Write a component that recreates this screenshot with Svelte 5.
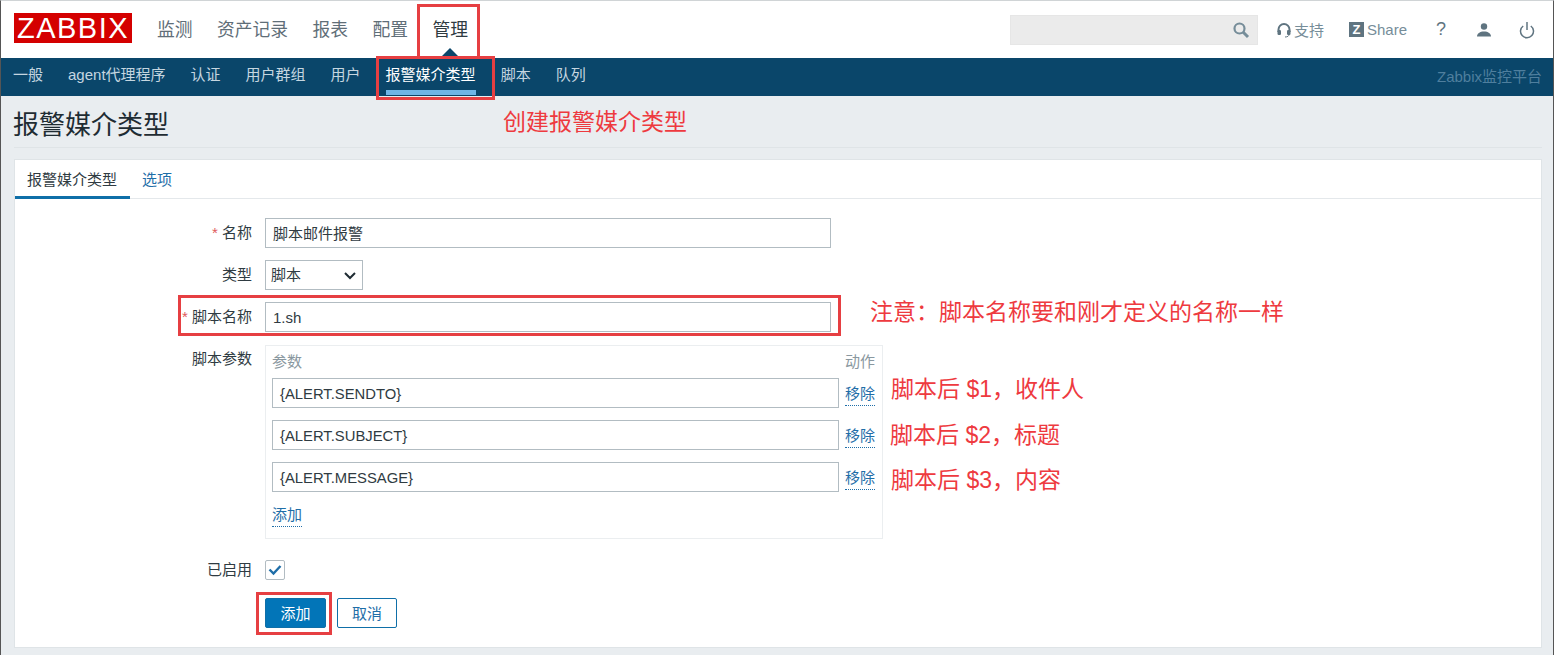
<script lang="ts">
  const mainNav = ['监测', '资产记录', '报表', '配置', '管理'];
  const subNav = ['一般', 'agent代理程序', '认证', '用户群组', '用户', '报警媒介类型', '脚本', '队列'];
  const params = ['{ALERT.SENDTO}', '{ALERT.SUBJECT}', '{ALERT.MESSAGE}'];
</script>

<div class="page">
  <header class="top">
    <div class="logo">ZABBIX</div>
    <nav class="main-nav">
      {#each mainNav as item, i}
        <span class="main-item" class:selected={i === 4}>{item}</span>
      {/each}
    </nav>
    <div class="tools">
      <div class="search">
        <svg width="18" height="18" viewBox="0 0 18 18" fill="none" stroke="#768d99">
          <circle cx="7.5" cy="7.5" r="5" stroke-width="2.2" />
          <path d="M11 11l5 5" stroke-width="3" />
        </svg>
      </div>
      <span class="tool support">
        <svg width="16" height="16" viewBox="0 0 16 16" fill="none">
          <path d="M2.5 10V7.5a5.5 5.5 0 0 1 11 0V10" stroke="#5f7480" stroke-width="2" />
          <rect x="1.5" y="8" width="3.5" height="5" rx="1.2" fill="#5f7480" />
          <rect x="11" y="8" width="3.5" height="5" rx="1.2" fill="#5f7480" />
          <path d="M13 12.5c0 1.5-1.5 2.5-4 2.5" stroke="#5f7480" />
        </svg>
        支持
      </span>
      <span class="tool share"><b class="z">Z</b>Share</span>
      <span class="tool help">?</span>
      <svg class="user" width="16" height="16" viewBox="0 0 16 16" fill="#5f7480">
        <circle cx="8" cy="4.5" r="3.2" />
        <path d="M1 14.5c0-3 3-5 7-5s7 2 7 5z" />
      </svg>
      <svg class="power" width="16" height="18" viewBox="0 0 16 18" fill="none" stroke="#5f7480" stroke-width="1.5">
        <path d="M8 1v8" />
        <path d="M4.2 5A6.5 6.5 0 1 0 11.8 5" />
      </svg>
    </div>
  </header>

  <nav class="sub-nav">
    {#each subNav as item, i}
      <span class="sub-item" class:selected={i === 5}>{item}</span>
    {/each}
    <span class="platform">Zabbix监控平台</span>
  </nav>

  <main class="content">
    <h1>报警媒介类型</h1>
    <section class="card">
      <div class="tabs">
        <span class="tab active">报警媒介类型</span>
        <span class="tab">选项</span>
      </div>
      <form class="form">
        <div class="row">
          <label><i>*</i> 名称</label>
          <div class="input wide">脚本邮件报警</div>
        </div>
        <div class="row">
          <label>类型</label>
          <div class="select">
            <span>脚本</span>
            <svg width="12" height="8" viewBox="0 0 12 8" fill="none" stroke="#1f2c33" stroke-width="2">
              <path d="M1 1l5 5 5-5" />
            </svg>
          </div>
        </div>
        <div class="row">
          <label><i>*</i> 脚本名称</label>
          <div class="input wide">1.sh</div>
        </div>
        <div class="row params-row">
          <label>脚本参数</label>
          <div class="params">
            <div class="params-head"><span>参数</span><span>动作</span></div>
            {#each params as p}
              <div class="param">
                <div class="input">{p}</div>
                <span class="link">移除</span>
              </div>
            {/each}
            <span class="link add">添加</span>
          </div>
        </div>
        <div class="row enabled">
          <label>已启用</label>
          <span class="check">
            <svg width="14" height="12" viewBox="0 0 14 12" fill="none" stroke="#1f6ea8" stroke-width="2.4">
              <path d="M1.5 5.5l4 4 7-7.5" />
            </svg>
          </span>
        </div>
        <div class="row actions">
          <span></span>
          <div class="buttons">
            <span class="btn primary">添加</span>
            <span class="btn">取消</span>
          </div>
        </div>
      </form>
    </section>
  </main>

  <!-- red markup drawn over the screenshot -->
  <div class="mark m-admin"></div>
  <div class="mark m-media"></div>
  <div class="mark m-script"></div>
  <div class="mark m-add"></div>
  <div class="note n1">创建报警媒介类型</div>
  <div class="note n2">注意：脚本名称要和刚才定义的名称一样</div>
  <div class="note n3">脚本后 $1，收件人</div>
  <div class="note n4">脚本后 $2，标题</div>
  <div class="note n5">脚本后 $3，内容</div>
</div>

<style>
  :global(body) {
    margin: 0;
    background: #e9edf0;
  }

  .page {
    position: relative;
    width: 1554px;
    height: 655px;
    overflow: hidden;
    box-sizing: border-box;
    border-top: 1px solid #d0d4d6;
    border-left: 1px solid #555;
    border-right: 1px solid #555;
    font-family: "Liberation Sans", "Noto Sans CJK SC", sans-serif;
    font-size: 15px;
    color: #1f2c33;
  }

  .top {
    display: flex;
    align-items: center;
    height: 57px;
    padding-left: 13px;
    background: #fff;
  }

  .logo {
    width: 118px;
    height: 30px;
    margin-bottom: 3px;
    background: #d40000;
    color: #fff;
    font-size: 29px;
    line-height: 31px;
    text-align: center;
    letter-spacing: 1.5px;
  }

  .main-nav {
    display: flex;
    gap: 24.4px;
    margin-left: 25px;
  }

  .main-item {
    position: relative;
    margin-bottom: 3px;
    font-size: 17.8px;
    color: #5f6e78;
  }

  .main-item.selected {
    color: #2f3b42;
  }

  .main-item.selected::after {
    content: '';
    position: absolute;
    left: 50%;
    bottom: -15px;
    margin-left: -8px;
    border: 8px solid transparent;
    border-top: 0;
    border-bottom-color: #0a466a;
  }

  .tools {
    display: flex;
    align-items: center;
    margin-left: auto;
  }

  .search {
    display: flex;
    align-items: center;
    justify-content: flex-end;
    box-sizing: border-box;
    width: 248px;
    height: 30px;
    padding-right: 7px;
    background: #ebebeb;
    border: 1px solid #e6e6e6;
  }

  .tool {
    display: flex;
    align-items: center;
    color: #768d99;
  }

  .support {
    gap: 2px;
    margin-left: 18px;
  }

  .share {
    margin-left: 25px;
  }

  .z {
    width: 15px;
    height: 15px;
    margin-right: 3px;
    background: #5f7480;
    color: #fff;
    font-size: 13px;
    line-height: 15px;
    text-align: center;
  }

  .help {
    margin-left: 29px;
    font-size: 18px;
    color: #5f7480;
  }

  .user {
    margin-left: 30px;
  }

  .power {
    margin-left: 27px;
    margin-right: 18px;
  }

  .sub-nav {
    display: flex;
    align-items: center;
    gap: 25px;
    box-sizing: border-box;
    height: 38px;
    padding: 0 0 4px 12px;
    background: #0a466a;
    color: #c5d6e0;
  }

  .sub-item {
    display: block;
    line-height: 22px;
  }

  .sub-item.selected {
    position: relative;
    color: #fff;
  }

  .sub-item.selected::after {
    content: '';
    position: absolute;
    left: 0;
    right: 0;
    bottom: -9px;
    height: 5px;
    background: #70b5e6;
  }

  .platform {
    margin-left: auto;
    margin-right: 11px;
    color: #4f7f9e;
  }

  .content {
    padding: 0 11px 0 13px;
  }

  h1 {
    margin: 0 0 11px;
    padding: 13px 0 5px;
    border-bottom: 1px solid #dfe4e7;
    font-size: 26px;
    line-height: 33px;
    font-weight: 400;
    color: #1f2c33;
    text-indent: -1px;
  }

  .card {
    height: 489px;
    background: #fff;
    border: 1px solid #dfe4e7;
    box-sizing: border-box;
  }

  .tabs {
    display: flex;
    height: 38px;
    border-bottom: 1px solid #e4e8eb;
  }

  .tab {
    padding: 0 12px;
    line-height: 39px;
    color: #1f6ea8;
  }

  .tab.active {
    color: #2f3b42;
    box-shadow: inset 0 -3px 0 #0f6fa8;
    height: 39px;
    padding-right: 13px;
  }

  .form {
    display: flex;
    flex-direction: column;
    padding-top: 19px;
  }

  .row {
    display: grid;
    grid-template-columns: 237px 1fr;
    column-gap: 13px;
    align-items: center;
    margin-bottom: 12px;
  }

  label {
    padding-bottom: 3px;
    text-align: right;
    color: #2f3b42;
  }

  label i {
    color: #e05a5a;
    font-style: normal;
  }

  .input {
    box-sizing: border-box;
    height: 30px;
    padding: 0 7px;
    border: 1px solid #b2bcc2;
    line-height: 29px;
    color: #2f3b42;
  }

  .wide {
    width: 566px;
  }

  .select {
    display: flex;
    align-items: center;
    justify-content: space-between;
    box-sizing: border-box;
    width: 98px;
    height: 30px;
    padding: 0 6px 0 5px;
    border: 1px solid #b2bcc2;
    color: #2f3b42;
  }

  .select span {
    margin-bottom: 3px;
  }

  .select svg {
    margin-top: 1px;
  }

  .params-row {
    align-items: start;
    margin-top: 1px;
    margin-bottom: 19px;
  }

  .params-row label {
    margin-top: 2px;
  }

  .params {
    box-sizing: border-box;
    width: 618px;
    height: 194px;
    padding: 4px 7px 0 6px;
    border: 1px solid #ebeef0;
  }

  .params-head {
    display: flex;
    justify-content: space-between;
    height: 28px;
    color: #8a98a0;
  }

  .param {
    display: flex;
    justify-content: space-between;
    align-items: center;
    height: 30px;
    margin-bottom: 12px;
  }

  .param .input {
    width: 567px;
    font-size: 14.8px;
    line-height: 31px;
  }

  .param .link {
    margin-top: 4px;
  }

  .link {
    padding-bottom: 2px;
    color: #1f6ea8;
    border-bottom: 1px dotted #1f6ea8;
    line-height: 18px;
  }

  .add {
    display: inline-block;
    margin-top: 2px;
  }

  .enabled {
    margin-bottom: 16px;
  }

  .check {
    display: flex;
    align-items: center;
    justify-content: center;
    box-sizing: border-box;
    width: 20px;
    height: 20px;
    border: 1px solid #b2bcc2;
    border-radius: 2px;
  }

  .buttons {
    display: flex;
    gap: 11px;
  }

  .btn {
    box-sizing: border-box;
    width: 60px;
    height: 30px;
    border: 1px solid #0f6fa8;
    border-radius: 2px;
    line-height: 29px;
    text-align: center;
    color: #1f6ea8;
  }

  .primary {
    width: 61px;
    background: #0275b8;
    color: #fff;
  }

  .mark {
    position: absolute;
    box-sizing: border-box;
    border: 3px solid #e63f42;
  }

  .m-admin {
    left: 416px;
    top: 3px;
    width: 63px;
    height: 55px;
  }

  .m-media {
    left: 375px;
    top: 55px;
    width: 119px;
    height: 44px;
  }

  .m-script {
    left: 177px;
    top: 294px;
    width: 663px;
    height: 41px;
  }

  .m-add {
    left: 255px;
    top: 591px;
    width: 76px;
    height: 43px;
  }

  .note {
    position: absolute;
    color: #ee3a3f;
    font-size: 23px;
    line-height: 30px;
    white-space: nowrap;
  }

  .n1 {
    left: 502px;
    top: 106px;
  }

  .n2 {
    left: 869px;
    top: 296px;
  }

  .n3 {
    left: 890px;
    top: 373px;
  }

  .n4 {
    left: 889px;
    top: 419px;
  }

  .n5 {
    left: 890px;
    top: 464px;
  }
</style>
